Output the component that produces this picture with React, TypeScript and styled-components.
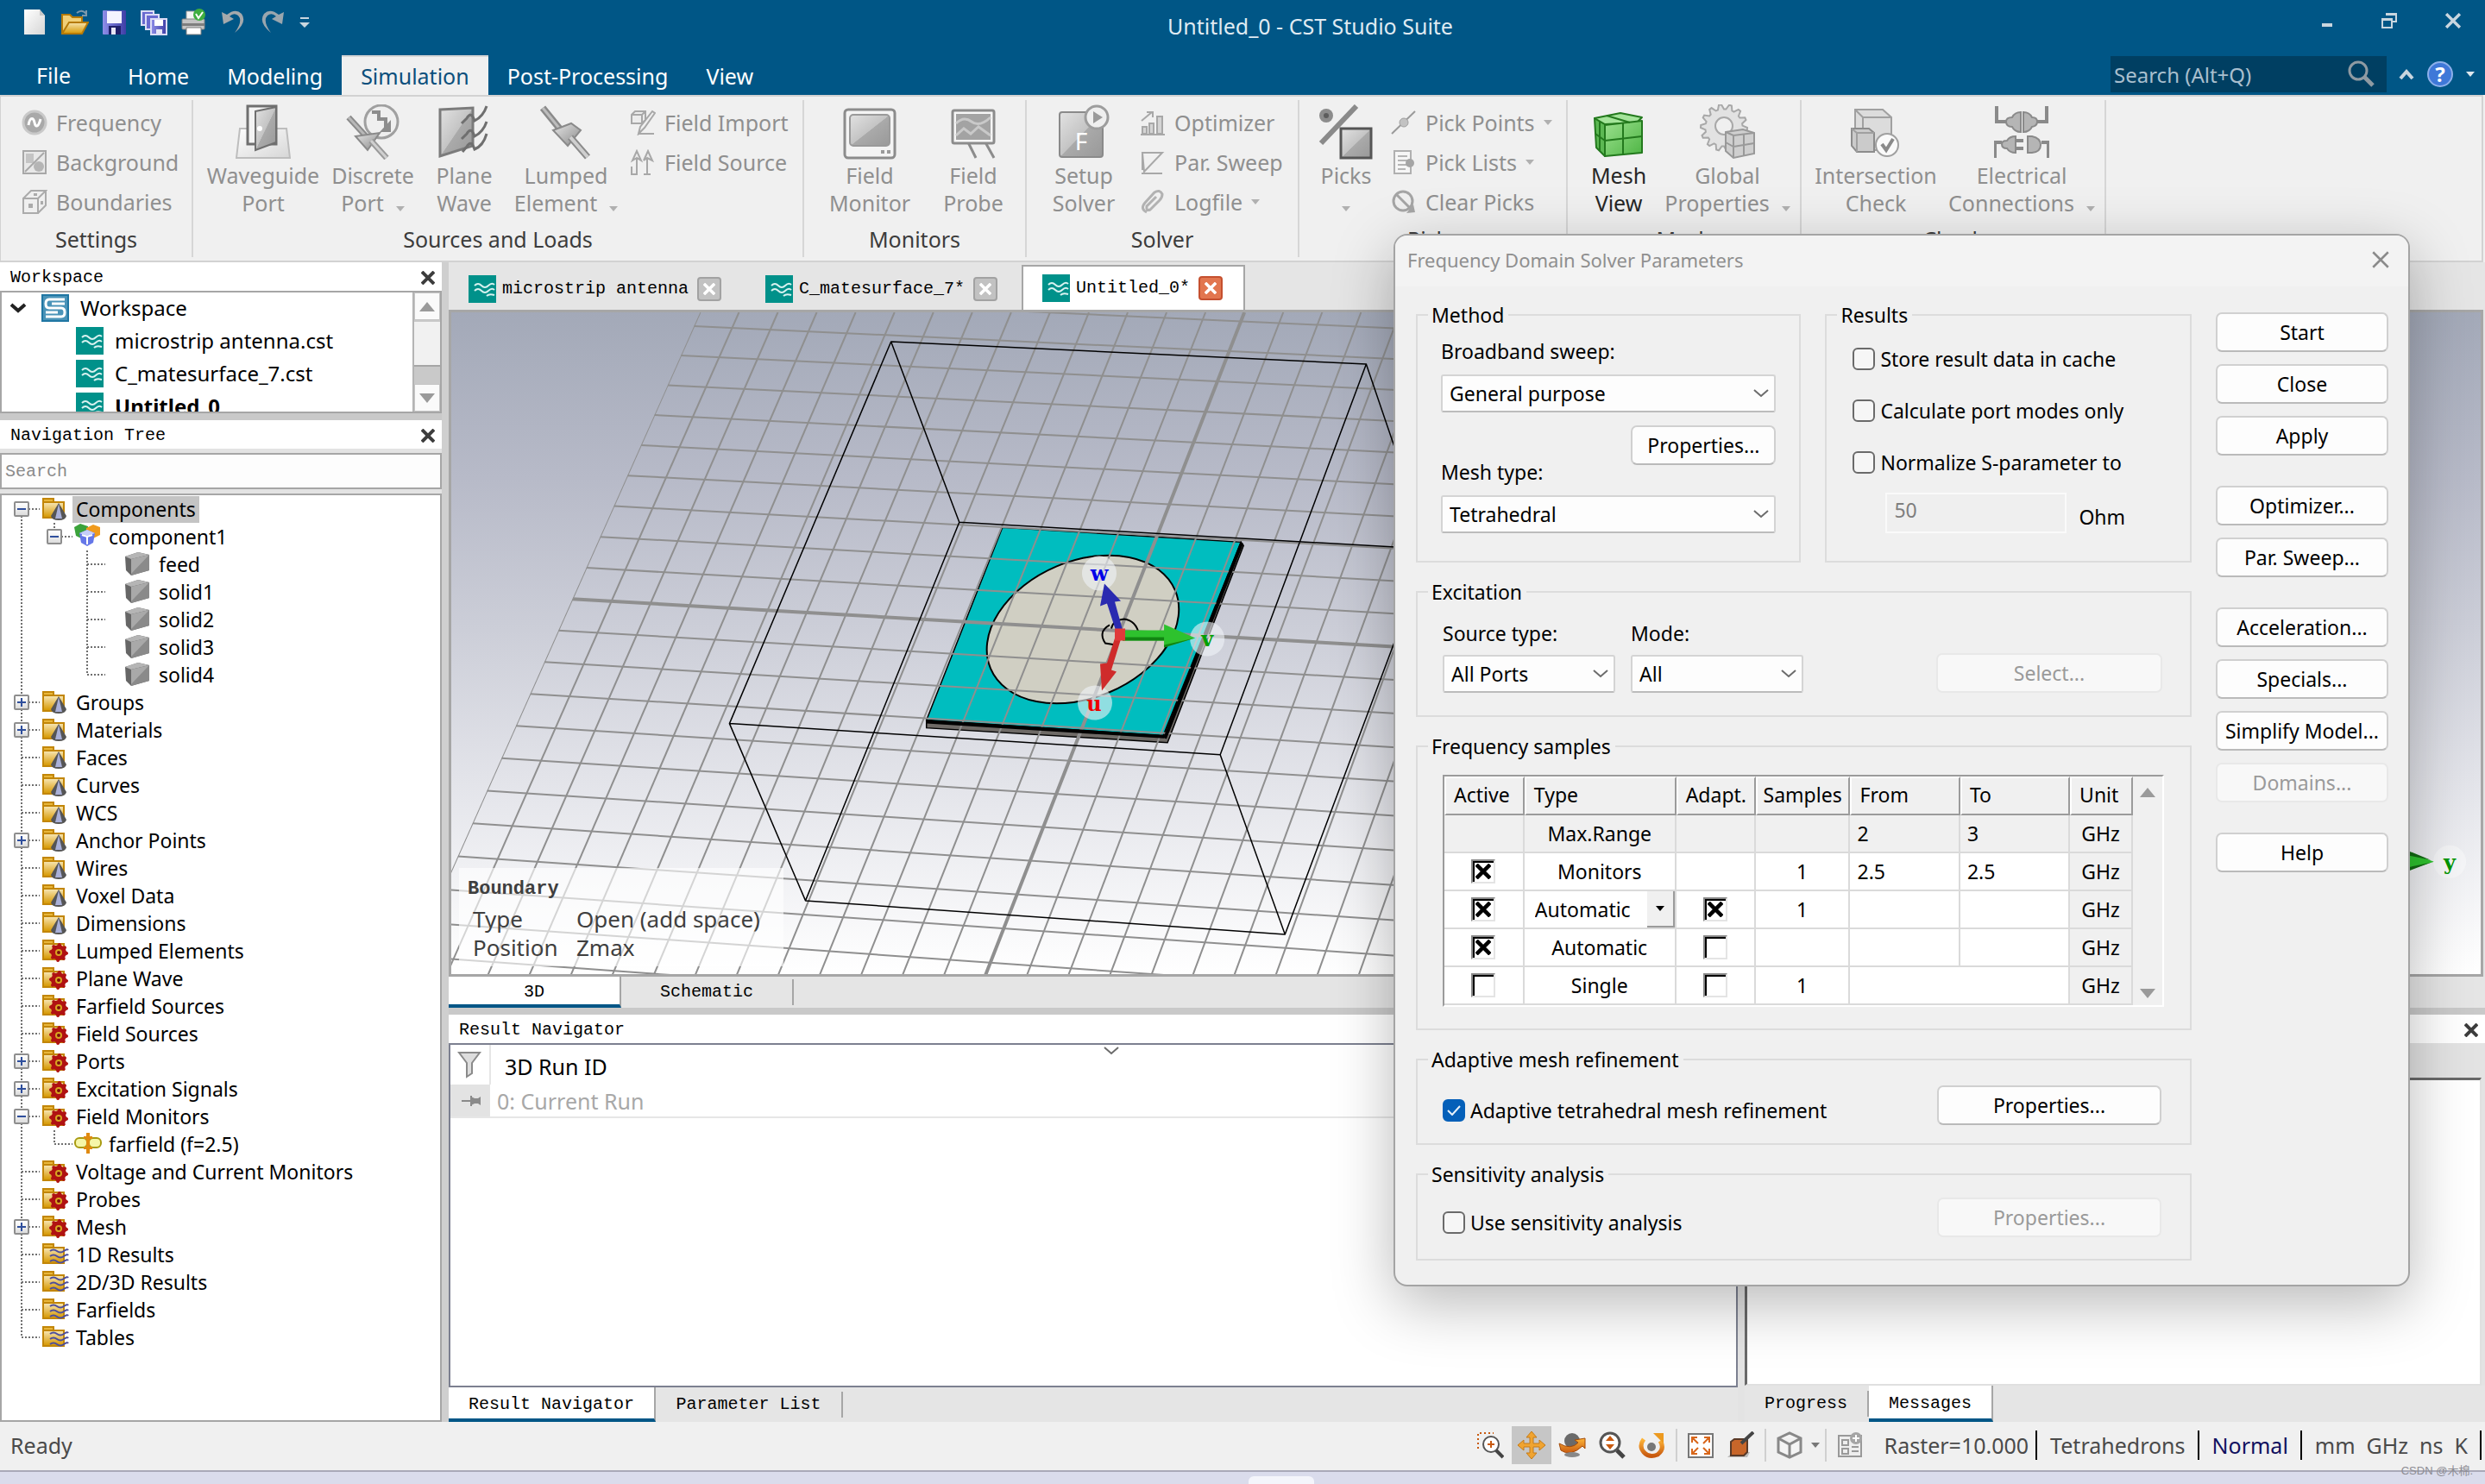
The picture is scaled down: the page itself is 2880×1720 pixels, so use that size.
import React from "react";
import styled, { createGlobalStyle, css } from "styled-components";

const UI = '"Noto Sans", "Open Sans", sans-serif';
const MONO = '"Liberation Mono", "Noto Sans CJK SC", monospace';

const GlobalStyle = createGlobalStyle`
  *, *::before, *::after { box-sizing: border-box; }
  body { margin: 0; background: #f0f0f0; font-family: ${UI}; font-size: 24px; color: #000; }
  button, input, select { font: inherit; color: inherit; margin: 0; }
  button { padding: 0; border: 0; background: none; }
  svg { display: block; flex: none; }
`;

/* ---------- window frame ---------- */

const Window = styled.div`
  position: relative;
  display: flex;
  flex-direction: column;
  height: 100vh;
  overflow: hidden;
`;

const TitleArea = styled.header`
  background: #005686;
  color: #fff;
  height: 110px;
  flex: none;
  display: flex;
  flex-direction: column;
  justify-content: space-between;
  font-size: 25px;
`;

const TitleBar = styled.div`
  display: grid;
  grid-template-columns: 1fr auto 1fr;
  align-items: start;
  height: 60px;
  padding: 0 28px 0 25px;
`;

const QuickAccess = styled.div`
  display: flex;
  gap: 14px;
  align-items: center;
  height: 52px;
`;

const WindowTitle = styled.h1`
  margin: 0;
  padding-left: 160px;
  font-size: 25px;
  font-weight: 400;
  line-height: 60px;
  color: #dfeaf2;
`;

const WindowControls = styled.div`
  display: flex;
  justify-content: flex-end;
  gap: 56px;
  height: 48px;
  align-items: center;
`;

const TabStrip = styled.nav`
  display: flex;
  height: 46px;
`;

const MenuTab = styled.button<{ $active?: boolean; $file?: boolean }>`
  padding: 0 22px;
  line-height: 48px;
  color: ${(p) => (p.$active ? "#0b4f7c" : "#fff")};
  background: ${(p) => (p.$active ? "#f0f0f0" : "transparent")};
  ${(p) => p.$active && "box-shadow: inset 0 2px #d6d6d6;"}
  ${(p) => p.$file && "padding: 0 44px 0 42px; line-height: 46px;"}
`;

const StripEnd = styled.div`
  margin-left: auto;
  display: flex;
  align-items: center;
  gap: 14px;
  padding: 0 12px 2px 0;
`;

const SearchField = styled.label`
  display: flex;
  align-items: center;
  width: 320px;
  height: 42px;
  padding: 0 14px 0 4px;
  background: #003f62;
  font-size: 24px;
  input {
    flex: 1;
    min-width: 0;
    border: 0;
    background: none;
    padding: 0;
    outline: 0;
  }
  input::placeholder { color: #a9bfce; opacity: 1; }
`;

/* ---------- ribbon ---------- */

const Ribbon = styled.div`
  display: flex;
  flex: none;
  height: 194px;
  margin-right: 2px;
  background: #f0f0f0;
  border: 2px solid #d2d2d2;
  border-left-width: 1px;
  font-size: 25px;
`;

const Group = styled.section<{ $w: number }>`
  width: ${(p) => p.$w}px;
  display: flex;
  flex-direction: column;
  margin: 4px 0;
  border-right: 2px solid #d6d6d6;
`;

const GroupBody = styled.div<{ $pad: number }>`
  display: flex;
  height: 142px;
  padding-left: ${(p) => p.$pad}px;
`;

const GroupLabel = styled.h2`
  margin: 0;
  font-size: 25px;
  font-weight: 400;
  line-height: 38px;
  text-align: center;
  color: #3c3c3c;
`;

const BigButton = styled.button<{ $w: number; $on?: boolean }>`
  width: ${(p) => p.$w}px;
  display: flex;
  flex-direction: column;
  align-items: center;
  padding-top: 5px;
  line-height: 32px;
  color: ${(p) => (p.$on ? "#262626" : "#8f8f8f")};
  span { display: flex; gap: 14px; align-items: center; height: 32px; }
  span svg { margin-top: 14px; }
  > svg { margin-bottom: 2px; }
`;

const SmallColumn = styled.div<{ $pad: number }>`
  display: flex;
  flex-direction: column;
  padding: 3px 0 0 ${(p) => p.$pad}px;
`;

const SmallButton = styled.button`
  display: flex;
  align-items: center;
  gap: 10px;
  height: 46px;
  white-space: nowrap;
  color: #8f8f8f;
`;

/* ---------- workspace ---------- */

const Body = styled.div`
  flex: 1;
  min-height: 0;
  display: flex;
  background: #e3e3e3;
`;

const Sidebar = styled.aside`
  width: 520px;
  flex: none;
  display: flex;
  flex-direction: column;
  border-right: 8px solid #cfcfcf;
`;

const PanelTitle = styled.div`
  display: flex;
  align-items: center;
  justify-content: space-between;
  height: 33px;
  flex: none;
  padding: 2px 8px 0 12px;
  background: #fff;
  font: 20px/30px ${MONO};
`;

const FileList = styled.div`
  display: flex;
  height: 142px;
  flex: none;
  border: 2px solid #a6a6a6;
  background: #fff;
  overflow: hidden;
`;

const FileRows = styled.ul`
  flex: 1;
  margin: 0;
  padding: 0;
  list-style: none;
`;

const FileRow = styled.li<{ $depth: number; $bold?: boolean }>`
  display: flex;
  align-items: center;
  gap: 13px;
  height: 38px;
  line-height: 34px;
  padding: 0 0 3px ${(p) => (p.$depth ? 86 : 9)}px;
  font-weight: ${(p) => (p.$bold ? 700 : 400)};
  svg + svg { margin-left: 4px; }
`;

const ScrollTrack = styled.div`
  width: 32px;
  display: flex;
  flex-direction: column;
  background: #c9c9c9;
  border-left: 2px solid #b4b4b4;
`;

const ScrollButton = styled.button<{ $end?: boolean }>`
  height: 32px;
  display: grid;
  place-items: center;
  background: #fafafa;
  border: 1px solid #c4c4c4;
  ${(p) => p.$end && "margin-top: auto;"}
`;

const ScrollThumb = styled.div`
  height: 52px;
  margin: 2px 0;
  background: #f1f1f1;
  border-bottom: 2px solid #a6a6a6;
`;

const Splitter = styled.div`
  height: 8px;
  flex: none;
  background: #c9c9c9;
`;

const TreeSearch = styled.input`
  height: 42px;
  flex: none;
  margin: 5px 0;
  padding: 0 4px;
  border: 2px solid #a6a6a6;
  background: #fdfdfd;
  outline: 0;
  && { font: 20px ${MONO}; }
  &::placeholder { color: #8a8a8a; opacity: 1; }
`;

const Tree = styled.ul`
  flex: 1;
  margin: 0;
  padding: 0;
  list-style: none;
  border: 2px solid #a6a6a6;
  background: #fff;
  overflow: hidden;
`;

const TreeRow = styled.li`
  display: flex;
  align-items: center;
  height: 32px;
  font-size: 23px;
`;

const Gutter = styled.div<{ $w: number }>`
  width: ${(p) => p.$w}px;
  height: 32px;
  display: grid;
  > * { grid-area: 1 / 1; }
`;

const Expander = styled.button<{ $x: number }>`
  width: 18px;
  height: 18px;
  margin: 7px 0 0 ${(p) => p.$x - 9}px;
  border: 2px solid #8e8e8e;
  border-radius: 2px;
  background: linear-gradient(#fff, #dcdcdc);
  display: grid;
  place-items: center;
`;

const NodeName = styled.span<{ $selected?: boolean }>`
  margin-left: 4px;
  padding: 0 4px;
  line-height: 31px;
  white-space: nowrap;
  background: ${(p) => (p.$selected ? "#c4c4c4" : "transparent")};
`;

const Main = styled.main`
  flex: 1;
  min-width: 0;
  display: flex;
  flex-direction: column;
`;

const DocTabs = styled.div`
  display: flex;
  align-items: flex-end;
  height: 55px;
  flex: none;
  background: #e5e5e5;
`;

const DocTab = styled.div<{ $active?: boolean }>`
  display: flex;
  align-items: center;
  gap: 7px;
  height: 52px;
  padding: 4px 28px 0 23px;
  font: 20px/48px ${MONO};
  ${(p) =>
    p.$active &&
    css`
      background: #fff;
      border: 2px solid #a6a6a6;
      border-bottom: 0;
      padding: 0 24px 0 22px;
    `}
`;

const TabClose = styled.button<{ $hot?: boolean }>`
  width: 28px;
  height: 28px;
  margin-left: 3px;
  display: grid;
  place-items: center;
  border-radius: 4px;
  border: 2px solid ${(p) => (p.$hot ? "#c5502f" : "#a2a2a2")};
  background: ${(p) => (p.$hot ? "#e2764f" : "#c2c2c2")};
`;

const Viewport = styled.div`
  position: relative;
  flex: 1;
  min-height: 0;
  margin-right: 2px;
  border: 3px solid #a6a6a6;
  background: linear-gradient(#a3a9b8 0%, #b7bac8 25%, #ccced8 48%, #e2e3e9 70%, #fff 100%);
  overflow: hidden;
`;

const BoundaryNote = styled.dl`
  position: absolute;
  left: 9px;
  bottom: 9px;
  width: 376px;
  height: 114px;
  margin: 0;
  padding: 8px 10px 4px;
  display: grid;
  grid-template-columns: 126px 1fr;
  grid-template-rows: 34px 34px 32px;
  align-items: center;
  background: rgba(255, 255, 255, 0.62);
  font-size: 26px;
  line-height: 32px;
  color: #3f3f3f;
  h3 { grid-column: 1 / 3; margin: 0; font: 700 22px/34px ${MONO}; }
  dt { padding-left: 6px; }
  dd { margin: 0; white-space: nowrap; }
`;

const ViewTabs = styled.div<{ $h: number }>`
  display: flex;
  align-items: center;
  height: ${(p) => p.$h}px;
  flex: none;
  background: #e5e5e5;
`;

const ViewTab = styled.button<{ $active?: boolean; $w: number; $line?: boolean }>`
  width: ${(p) => p.$w}px;
  && { font: 20px/30px ${MONO}; }
  ${(p) => p.$line && "border-right: 2px solid #a6a6a6;"}
  ${(p) =>
    p.$active &&
    css`
      align-self: stretch;
      padding-top: 3px;
      background: #fff;
      border-right: 2px solid #a6a6a6;
      border-bottom: 4px solid #005686;
    `}
`;

const Dock = styled.div`
  display: grid;
  grid-template-columns: 1494fr 8px 858fr;
  height: 472px;
  flex: none;
`;

const DockPane = styled.section`
  min-width: 0;
  display: flex;
  flex-direction: column;
`;

const ResultBox = styled.div`
  flex: 1;
  border: 2px solid #7c8090;
  background: #fff;
`;

const ResultTable = styled.table`
  width: 100%;
  border-collapse: collapse;
  font-size: 25px;
  line-height: 34px;
  th, td { font-weight: 400; text-align: left; padding: 0; }
  tr { border-bottom: 2px solid #e6e6e6; }
  thead tr { border: 0; }
  td { height: 38px; color: #a8a8a8; padding-left: 8px; }
  th + th { padding-left: 16px; border-left: 2px solid #e6e6e6; }
  th:first-child, td:first-child { width: 46px; padding-left: 8px; }
  td:first-child { background: #e3e3e3; }
`;

const HeaderCell = styled.div`
  display: grid;
  grid-template-columns: 694px auto;
  align-items: start;
  height: 46px;
  padding-top: 2px;
  line-height: 46px;
`;

const MessageTools = styled.div`
  height: 40px;
  flex: none;
  background: #e3e3e3;
`;

const MessageBox = styled.div`
  flex: 1;
  margin-right: 4px;
  border: 3px solid #696969;
  border-right: 2px solid #e0e0e0;
  border-bottom: 2px solid #e0e0e0;
  background: #fff;
`;

const StatusBar = styled.footer`
  display: flex;
  align-items: center;
  height: 58px;
  flex: none;
  padding: 0 4px 3px 12px;
  background: #f0f0f0;
  border-bottom: 2px solid #a9a9b8;
  font-size: 25px;
  color: #4a4a4a;
`;

const StatusTools = styled.div`
  margin-left: auto;
  display: flex;
  align-items: center;
  gap: 3px;
`;

const Tool = styled.button<{ $on?: boolean }>`
  width: ${(p) => (p.$on ? 46 : 43)}px;
  height: 44px;
  display: grid;
  place-items: center;
  background: ${(p) => (p.$on ? "#c6c6c6" : "transparent")};
`;

const ToolDivider = styled.i`
  width: 2px;
  height: 38px;
  margin: 0 3px;
  background: #d0d0d0;
`;

const Reading = styled.span<{ $blue?: boolean }>`
  padding: 0 14px 0 15px;
  line-height: 34px;
  border-right: 2px solid #000;
  white-space: pre;
  color: ${(p) => (p.$blue ? "#10105f" : "#4a4a4a")};
  &:first-of-type { padding: 0 8px 0 18px; }
`;

const Taskbar = styled.div`
  height: 14px;
  flex: none;
  background: #dadcec;
  display: flex;
  justify-content: center;
`;

const TaskPill = styled.div`
  width: 76px;
  margin: 5px 0 0 90px;
  background: #f4f5fb;
  border-radius: 6px 6px 0 0;
`;

const Watermark = styled.small`
  position: absolute;
  right: 14px;
  bottom: 6px;
  font: 13px/18px "Liberation Sans", "Noto Sans CJK SC", sans-serif;
  color: #8d8d94;
`;

/* ---------- solver dialog ---------- */

const Dialog = styled.section`
  position: absolute;
  top: 271px;
  right: 87px;
  width: 1178px;
  border: 2px solid #a4a4a4;
  border-radius: 16px;
  background: #f0f0f0;
  box-shadow: 0 20px 70px rgba(0, 0, 0, 0.28);
  overflow: hidden;
  font-size: 23px;
`;

const DialogTitle = styled.header`
  display: flex;
  justify-content: space-between;
  align-items: center;
  height: 59px;
  padding: 0 22px 3px 14px;
  background: #f3f3f3;
  font-size: 22px;
  color: #8f8f8f;
`;

const DialogBody = styled.form`
  display: flex;
  gap: 28px;
  padding: 18px 23px 28px 24px;
`;

const Sections = styled.div`
  flex: 1;
  display: flex;
  flex-direction: column;
  gap: 19px;
`;

const Row = styled.div<{ $gap?: number; $align?: string }>`
  display: flex;
  gap: ${(p) => p.$gap ?? 0}px;
  align-items: ${(p) => p.$align ?? "stretch"};
`;

const MeshRow = styled.div`
  display: flex;
  justify-content: space-between;
  align-items: flex-start;
  height: 72px;
  padding-top: 3px;
  label { align-self: flex-end; }
`;

const Box = styled.fieldset<{ $grow?: number; $pad: string }>`
  flex: ${(p) => (p.$grow ? `${p.$grow} 1 0` : "none")};
  min-width: 0;
  margin: 0;
  border: 2px solid #dcdcdc;
  padding: 0;
  legend { margin-left: 12px; padding: 0 5px 0 4px; line-height: 30px; }
  > div { padding: ${(p) => p.$pad}; }
`;

const Stack = styled.div<{ $gap: number }>`
  display: flex;
  flex-direction: column;
  gap: ${(p) => p.$gap}px;
`;

const FieldLabel = styled.label`
  line-height: 30px;
`;

const SelectShell = styled.span<{ $w?: number }>`
  display: grid;
  align-items: center;
  width: ${(p) => (p.$w ? `${p.$w}px` : "100%")};
  > * { grid-area: 1 / 1; }
  svg { justify-self: end; margin-right: 8px; pointer-events: none; }
  select {
    appearance: none;
    width: 100%;
    height: 44px;
    padding: 0 30px 0 8px;
    border: 2px solid #d4d4d4;
    border-bottom-color: #bcbcbc;
    border-radius: 3px;
    background: #fdfdfd;
  }
`;

const PushButton = styled.button<{ $w: number; $right?: boolean }>`
  width: ${(p) => p.$w}px;
  height: 46px;
  border: 2px solid #d0d0d0;
  border-bottom-color: #bababa;
  border-radius: 7px;
  background: #fdfdfd;
  ${(p) => p.$right && "margin-left: auto;"}
  &:disabled { color: #9a9a9a; background: #f8f8f8; border-color: #e8e8e8; }
`;

const CheckLabel = styled.label`
  display: flex;
  align-items: center;
  gap: 6px;
  line-height: 34px;
`;

const CheckShell = styled.span`
  display: grid;
  place-items: center;
  > * { grid-area: 1 / 1; }
  svg { pointer-events: none; display: none; }
  input { appearance: none; }
  input:checked + svg { display: block; }
`;

const RoundBox = styled.input`
  width: 26px;
  height: 26px;
  border: 2px solid #6a6a6a;
  border-radius: 6px;
  background: #f6f6f6;
  &:checked { background: #0560b9; border-color: #0560b9; }
`;

const SunkenBox = styled.input`
  width: 28px;
  height: 28px;
  border: 2px solid #8a8a8a;
  border-right-color: #e4e4e4;
  border-bottom-color: #e4e4e4;
  box-shadow: inset 2px 2px #000;
  background: #fff;
`;

const Impedance = styled.input`
  width: 210px;
  height: 47px;
  padding: 0 8px 8px;
  border: 2px solid #fafafa;
  background: #efefef;
  &:disabled { color: #7e7e7e; }
`;

const Indent = styled.div`
  display: flex;
  gap: 14px;
  padding-left: 38px;
  margin-top: 18px;
  label { align-self: flex-end; line-height: 38px; }
`;

const GridFrame = styled.div`
  display: flex;
  border: 2px solid #fff;
  border-top-color: #9b9b9b;
  border-left-color: #9b9b9b;
`;

const SampleTable = styled.table`
  flex: 1;
  border-collapse: separate;
  border-spacing: 0;
  table-layout: fixed;
  background: #fff;
  th {
    height: 45px;
    padding: 0 0 4px 9px;
    font-weight: 400;
    text-align: left;
    background: #f0f0f0;
    border: 2px solid #fff;
    border-right-color: #9b9b9b;
    border-bottom-color: #9b9b9b;
  }
  th:nth-child(4) { padding-left: 7px; }
  td {
    height: 44px;
    padding: 0;
    text-align: center;
    border-right: 2px solid #dadada;
    border-bottom: 2px solid #dadada;
  }
  tbody tr:first-child td, td:last-child { background: #f0f0f0; }
  td:nth-last-child(2), td.from { text-align: left; padding-left: 8px; }
`;

const TypePick = styled.div`
  display: flex;
  align-items: stretch;
  height: 42px;
  select { appearance: none; flex: 1; min-width: 0; border: 0; background: none; padding: 0 0 0 12px; }
`;

const DropButton = styled.button`
  width: 32px;
  display: grid;
  place-items: center;
  background: #f0f0f0;
  border-right: 2px solid #9b9b9b;
  border-bottom: 2px solid #9b9b9b;
`;

const GridScroll = styled.div`
  width: 34px;
  display: flex;
  flex-direction: column;
  justify-content: space-between;
  align-items: center;
  padding: 12px 0 8px;
  background: #f0f0f0;
`;

const ButtonColumn = styled.div`
  width: 200px;
  display: flex;
  flex-direction: column;
  gap: 35px;
  padding-top: 12px;
`;

/* ---------- icons ---------- */

const Caret = ({ c = "#b0b0b0" }: { c?: string }) => (
  <svg width="10" height="6" viewBox="0 0 10 6"><path d="M0 0h10L5 6z" fill={c} /></svg>
);
const Cross = ({ s = 16, c = "#3d3d3d", w = 4 }: { s?: number; c?: string; w?: number }) => (
  <svg width={s} height={s} viewBox="0 0 16 16"><path d="M1 1l14 14M15 1L1 15" stroke={c} strokeWidth={w} fill="none" /></svg>
);
const Chevron = () => (
  <svg width="18" height="10" viewBox="0 0 18 10"><path d="M1 1l8 7 8-7" stroke="#6b6b6b" strokeWidth="2" fill="none" /></svg>
);
const Triangle = ({ down }: { down?: boolean }) => (
  <svg width="18" height="12" viewBox="0 0 18 12"><path d={down ? "M0 1h18l-9 11z" : "M0 12h18L9 1z"} fill="#9a9a9a" /></svg>
);

const Defs = () => (
  <svg width="0" height="0" style={{ position: "absolute" }} aria-hidden="true">
    <defs>
      <linearGradient id="grey" x1="0" y1="0" x2="1" y2="1"><stop offset="0" stopColor="#e2e2e2" /><stop offset=".5" stopColor="#c4c4c4" /><stop offset=".51" stopColor="#aaa" /><stop offset="1" stopColor="#999" /></linearGradient>
      <linearGradient id="paper" x1="0" y1="0" x2="1" y2="1"><stop offset="0" stopColor="#fff" /><stop offset="1" stopColor="#d6d6d6" /></linearGradient>
      <linearGradient id="gold" x1="0" y1="0" x2="0" y2="1"><stop offset="0" stopColor="#f6e3ad" /><stop offset="1" stopColor="#d79a05" /></linearGradient>
      <linearGradient id="violet" x1="0" y1="0" x2="1" y2="0"><stop offset="0" stopColor="#8e8ee8" /><stop offset="1" stopColor="#3e3ea6" /></linearGradient>
      <linearGradient id="orange" x1="0" y1="0" x2="0" y2="1"><stop offset="0" stopColor="#ffb638" /><stop offset="1" stopColor="#c85a10" /></linearGradient>
      <linearGradient id="leaf" x1="0" y1="0" x2="1" y2="1"><stop offset="0" stopColor="#9be08e" /><stop offset="1" stopColor="#4eb544" /></linearGradient>
      <linearGradient id="steel" x1="0" y1="0" x2="1" y2="1"><stop offset="0" stopColor="#e6e6e6" /><stop offset="1" stopColor="#8a8a8a" /></linearGradient>
    </defs>
  </svg>
);

const quick = [
  <g key="n"><path d="M3 1h18l6 7v22H3z" fill="url(#paper)" /><path d="M21 1v7h6z" fill="#c8c8c8" /></g>,
  <g key="o"><path d="M18 5q6-5 11 1M29 2v6h-5" stroke="#7c98ac" strokeWidth="2" fill="none" /><path d="M1 28V7h9l3 3h11v8z" fill="#f0cf78" stroke="#b57a08" strokeWidth="2" /><path d="M9 16h22l-7 13H1z" fill="url(#gold)" stroke="#b57a08" strokeWidth="2" /></g>,
  <g key="s"><rect x="2" y="2" width="27" height="28" rx="1" fill="url(#violet)" /><rect x="7" y="3" width="17" height="14" fill="#f4f4ff" /><rect x="9" y="20" width="14" height="10" fill="#20206a" /><rect x="12" y="22" width="5" height="8" fill="#e6e6f4" /></g>,
  <g key="a"><path d="M1 3h14v16H1z" fill="#6a6ad0" stroke="#dcdcf6" strokeWidth="2" /><path d="M6 7h15v17H6z" fill="#6a6ad0" stroke="#dcdcf6" strokeWidth="2" /><rect x="12" y="12" width="18" height="18" fill="url(#violet)" stroke="#dcdcf6" strokeWidth="2" /><rect x="16" y="13" width="10" height="7" fill="#fff" /><rect x="18" y="24" width="7" height="5" fill="#e6e6f4" /></g>,
  <g key="p"><path d="M7 3h14v10H7z" fill="#f4f4f4" stroke="#9a9a9a" /><rect x="2" y="12" width="26" height="12" rx="1" fill="#c4c4c4" stroke="#838383" /><rect x="2" y="17" width="26" height="3" fill="#7e7e7e" /><path d="M7 22h17v8H7z" fill="#fff" stroke="#7e7e7e" /><circle cx="22" cy="7" r="7" fill="#3fae3f" /><path d="M18 6l3 5 5-7" stroke="#fff" strokeWidth="2" fill="none" /></g>,
  <path key="u" d="M2 4l2 14 12-6-5-3q5-5 10-1 6 6-4 20Q32 16 25 6 18-1 8 7z" fill="#a5a9ac" />,
  <path key="r" d="M28 4l-2 14-12-6 5-3q-5-5-10-1-6 6 4 20Q-2 16 5 6q7-7 17 1z" fill="#9aa6ae" />,
];

const small: Record<string, React.ReactNode> = {
  frequency: <g><circle cx="15" cy="15" r="13" fill="#a9a9a9" stroke="#c9c9c9" strokeWidth="3" /><path d="M8 18c2-11 6-8 7-3s4 7 7-4" fill="none" stroke="#fff" strokeWidth="3" /></g>,
  background: <g><rect x="2" y="2" width="26" height="26" fill="#e8e8e8" stroke="#a8a8a8" strokeWidth="2" /><path d="M5 5h9v11H5z" fill="#c4c4c4" /><path d="M4 26L26 4" stroke="#a8a8a8" strokeWidth="2" /><circle cx="20" cy="20" r="6" fill="#b5b5b5" /></g>,
  boundaries: <g fill="#efefef" stroke="#ababab" strokeWidth="2"><path d="M2 11h17v17H2zM2 11L11 2h17l-9 9M28 2v17l-9 9" /><path d="M8 17h5v5H8z" fill="#ababab" stroke="none" /><path d="M14 5h4v3h-4zM22 14h3v4h-3z" fill="#ababab" stroke="none" /></g>,
  import: <g fill="none" stroke="#a8a8a8" strokeWidth="2"><path d="M2 6l4-4h12v10l-4 4H2zM2 6h12v10M14 6l4-4" fill="#ececec" /><path d="M10 28l2-8L26 2l3 2-12 17zM10 28h18" /></g>,
  source: <path d="M8 29V10M8 10L3 13l5-11 5 11zM20 29V10M20 10l-4 3 5-11 5 11zM2 20v9h7M16 29h8" fill="#ececec" stroke="#a8a8a8" strokeWidth="2" />,
  optimizer: <g fill="#d4d4d4" stroke="#a8a8a8" strokeWidth="2"><path d="M3 20h5v8H3zM11 16h5v12h-5zM20 8h6v20h-6zM1 29h28" /><path d="M2 13L14 3M8 3h7v6" fill="none" /></g>,
  sweep: <path d="M3 4h23L5 26zM3 4v20M2 28h24" fill="none" stroke="#a8a8a8" strokeWidth="2" />,
  logfile: <path d="M8 27q-8-4-2-11L17 4q6-4 9 2 0 4-3 7L12 24q-5 2-4-4L19 9" fill="none" stroke="#b2b2b2" strokeWidth="3" />,
  points: <g><path d="M1 28L28 2" stroke="#9a9a9a" strokeWidth="2" /><circle cx="15" cy="15" r="5" fill="#c2c2c2" stroke="#a0a0a0" /></g>,
  lists: <g><path d="M4 2h19v26H4z" fill="#f6f6f6" stroke="#b0b0b0" strokeWidth="2" /><path d="M8 8h11M8 13h11M8 18h11M8 23h9" stroke="#b5b5b5" strokeWidth="2" /><circle cx="22" cy="16" r="5" fill="#a5a5a5" /></g>,
  clear: <g fill="none" stroke="#a5a5a5" strokeWidth="3"><circle cx="14" cy="14" r="11" fill="#efefef" /><path d="M6 6l17 17" /><path d="M18 28l10-1-2-9" fill="#a5a5a5" stroke="none" /></g>,
};
const SmallIcon = ({ name }: { name: string }) => <svg width="30" height="30" viewBox="0 0 30 30">{small[name]}</svg>;

const gearPath = (cx: number, cy: number, r: number, n: number) =>
  Array.from({ length: n * 4 }, (_, i) => {
    const a = (i / (n * 4)) * Math.PI * 2;
    const q = i % 4 < 2 ? r : r * 0.8;
    return `${i ? "L" : "M"}${(cx + q * Math.cos(a)).toFixed(1)} ${(cy + q * Math.sin(a)).toFixed(1)}`;
  }).join("") + "z";

const big: Record<string, React.ReactNode> = {
  waveguide: <g><path d="M5 28h54l4 34H1z" fill="url(#paper)" stroke="#bdbdbd" strokeWidth="2" /><path d="M14 2h33v44H14z" fill="#f4f4f4" stroke="#6f6f6f" strokeWidth="3" /><path d="M23 8l24-5v41l-24 9z" fill="url(#grey)" stroke="#6f6f6f" strokeWidth="2" /><circle cx="28" cy="28" r="3" fill="#fff" /></g>,
  discrete: <g><circle cx="42" cy="20" r="19" fill="#efefef" stroke="#a0a0a0" strokeWidth="3" /><path d="M31 9h8v8h8v10" fill="none" stroke="#8c8c8c" strokeWidth="4" /><path d="M53 18v14H40z" fill="#8c8c8c" /><path d="M4 15l22 24" stroke="#8a8a8a" strokeWidth="7" /><path d="M4 15l22 24" stroke="#b8b8b8" strokeWidth="3" /><path d="M12 37l28-4-14 20z" fill="url(#steel)" stroke="#8a8a8a" strokeWidth="2" /><path d="M30 42l18 20" stroke="#9a9a9a" strokeWidth="7" /><path d="M30 42l18 20" stroke="#d0d0d0" strokeWidth="3" /></g>,
  plane: <g><path d="M4 6l38-2v44L4 60z" fill="url(#grey)" stroke="#7b7b7b" strokeWidth="3" /><path d="M58 2q-4 12-14 17-4-12-9-3l-6 6M58 20q-4 12-14 17-4-12-9-3l-6 6M58 34q-4 14-14 18-4-12-9-3l-5 6" fill="none" stroke="#6f6f6f" strokeWidth="3" /></g>,
  lumped: <g><path d="M5 4l26 32" stroke="#8a8a8a" strokeWidth="8" /><path d="M5 4l26 32" stroke="#bdbdbd" strokeWidth="3" /><path d="M17 30l21-8 11 8-15 18z" fill="url(#steel)" stroke="#8a8a8a" strokeWidth="2" /><path d="M37 38l20 23" stroke="#8a8a8a" strokeWidth="8" /><path d="M37 38l20 23" stroke="#cfcfcf" strokeWidth="4" /></g>,
  monitor: <g><rect x="3" y="6" width="58" height="56" rx="4" fill="#f4f4f4" stroke="#8c8c8c" strokeWidth="3" /><rect x="9" y="12" width="46" height="36" rx="4" fill="url(#grey)" stroke="#9a9a9a" strokeWidth="2" /><path d="M45 53h4v4h-4zM52 53h4v4h-4z" fill="#9a9a9a" /></g>,
  probe: <g><path d="M26 44l9 18M46 44l10 18" stroke="#8c8c8c" strokeWidth="3" /><rect x="8" y="7" width="48" height="38" rx="2" fill="#f6f6f6" stroke="#8c8c8c" strokeWidth="3" /><rect x="12" y="11" width="40" height="30" fill="#a3a3a3" /><path d="M12 22q9-9 18-2t22-5M12 36l9-8 8 6 9-8 14 10" stroke="#c9c9c9" strokeWidth="3" fill="none" /></g>,
  setup: <g><rect x="4" y="9" width="50" height="52" rx="3" fill="url(#grey)" stroke="#8a8a8a" strokeWidth="2" /><text x="29" y="53" fontFamily={UI} fontSize="28" fill="#fff" textAnchor="middle">F</text><circle cx="47" cy="15" r="13" fill="#efefef" stroke="#9d9d9d" strokeWidth="3" /><path d="M43 8l11 7-11 7z" fill="#9a9a9a" /></g>,
  picks: <g><circle cx="9" cy="13" r="8" fill="#8c8c8c" /><circle cx="9" cy="13" r="3" fill="#5c5c5c" /><path d="M44 2L3 45" stroke="#8a8a8a" strokeWidth="6" /><rect x="26" y="28" width="35" height="34" fill="url(#grey)" stroke="#555" strokeWidth="3" /></g>,
  mesh: <g stroke="#23791d" strokeWidth="2" strokeLinejoin="round"><path d="M4 16l12 7v37L6 50z" fill="#5cb853" /><path d="M4 16l30-6 25 5-6 6-37 2z" fill="#a4e49a" /><path d="M16 24l43-5v37l-43 4z" fill="url(#leaf)" /><path d="M37 21v37M16 42l43-5M5 34l11 8M10 20v34M18 13l27 8" fill="none" /></g>,
  global: <g><path d={gearPath(28, 27, 27, 14)} fill="#e2e2e2" stroke="#a8a8a8" strokeWidth="2" /><circle cx="28" cy="25" r="10" fill="#f0f0f0" stroke="#a8a8a8" strokeWidth="2" /><path d="M30 32l20-3 13 4v24l-24 5-9-8z" fill="#cfcfcf" stroke="#999" strokeWidth="2" /><path d="M30 32l9 4 24-3M39 36v26M51 35v25M30 44l9 5 24-4" stroke="#999" strokeWidth="2" fill="none" /></g>,
  check: <g stroke="#a0a0a0" strokeWidth="2"><path d="M8 6h32l10 9v38H18L8 46z" fill="#dcdcdc" /><path d="M8 6l9 9h33M17 15v16" fill="none" /><path d="M4 28h20l6 5v22H10l-6-7z" fill="#cbcbcb" stroke="#8c8c8c" /><path d="M4 28l6 5h20M10 33v22" fill="none" /><circle cx="45" cy="47" r="13" fill="#fafafa" /><path d="M39 46l5 7 8-13" fill="none" stroke="#8a8a8a" strokeWidth="4" /></g>,
  electrical: <g fill="none" stroke="#8a8a8a" strokeWidth="4"><path d="M3 2v18h12M61 2v18H49M1 62V44h8M63 62V44h-8" /><path d="M14 20q0-5 7-5 3-6 10-6v23q-7 0-10-6-7 0-7-6z" fill="#b5b5b5" strokeWidth="2" /><path d="M34 9q7 0 10 6 6 0 6 5t-6 6q-3 6-10 6z" fill="#b5b5b5" strokeWidth="2" /><path d="M9 46q0-4 6-4 3-5 10-5v19q-7 0-10-5-6 0-6-5z" fill="#b5b5b5" strokeWidth="2" /><path d="M25 42h9M25 51h9" /><path d="M39 37h5q10 2 10 10t-10 9h-5z" fill="#b5b5b5" strokeWidth="2" /></g>,
};
const BigIcon = ({ name }: { name: string }) => <svg width="64" height="64" viewBox="0 0 64 64">{big[name]}</svg>;

const CstIcon = () => (
  <svg width="32" height="32" viewBox="0 0 32 32">
    <rect width="32" height="32" fill="#00918a" />
    <path d="M7 12q4-4 8 0t8 0 7-1M7 18q4-4 8 0t8 0 7-1M21 24q3-3 9-1" fill="none" stroke="#d8f2f0" strokeWidth="2" />
  </svg>
);
const SuiteIcon = () => (
  <svg width="32" height="32" viewBox="0 0 32 32">
    <rect x="1" y="1" width="30" height="30" fill="#4a93b8" stroke="#1f76a3" strokeWidth="2" />
    <path d="M27 6H9q-4 0-4 5t4 5h14q4 0 4 5t-4 5H5M27 11H12M5 21h14" fill="none" stroke="#fff" strokeWidth="3" />
  </svg>
);

const folder = (
  <g>
    <path d="M1 27V3h14v4h12v20z" fill="#c28608" />
    <path d="M3 9h22v16H3z" fill="url(#gold)" />
    <path d="M3 5h10v2H3z" fill="#e8b63a" />
  </g>
);
const nodes: Record<string, React.ReactNode> = {
  cone: <g>{folder}<path d="M20 9l9 15q-1 5-9 5t-9-5z" fill="#555" /><path d="M20 10l4 17h-8z" fill="#a9b0d8" /></g>,
  gear: <g>{folder}<path d={gearPath(20, 18, 11, 8)} fill="#b01212" /><circle cx="20" cy="18" r="4" fill="#d8a520" /><circle cx="20" cy="18" r="2" fill="#7c0b0b" /></g>,
  wave: <g>{folder}<path d="M10 12q4-3 8 0t8 0 5-1M10 18q4-3 8 0t8 0 5-1M10 24q4-3 8 0t8 0 5-1" fill="none" stroke="#4c4c9c" strokeWidth="2" /></g>,
  parts: <g><path d="M0 5l7-4 9 3v9l-8 5-6-3z" fill="#3ba33b" /><path d="M14 6l8-4 8 3v9l-8 4-8-3z" fill="#f09a1c" /><path d="M6 12l9-4 9 4-2 11-7 4-7-4z" fill="#6577e8" /><path d="M6 12l9-4 9 4-9 3z" fill="#c6cefa" /><path d="M9 14l6 2 6-2M15 16v9" stroke="#fff" strokeWidth="2" fill="none" /></g>,
  solid: <g><path d="M1 7l15-5 13 3v18l-21 6-6-6z" fill="#666" /><path d="M1 7l15-5 13 3-21 5z" fill="#b5b5b5" /><path d="M8 10l21-5v18L8 29z" fill="#8a8a8a" /><path d="M8 10l21-5L8 27z" fill="#a9a9a9" /></g>,
  far: <g><rect x="1" y="9" width="14" height="11" rx="5" fill="#f6f6a8" stroke="#a89a10" strokeWidth="2" /><rect x="17" y="9" width="14" height="11" rx="5" fill="#f6f6a8" stroke="#a89a10" strokeWidth="2" /><path d="M14 3h4v24h-4zM11 7h10v3H11zM11 19h10v3H11z" fill="#e08a10" /></g>,
};

/* ---------- navigation tree ---------- */

type Guide = { w: number; x: number; v?: "full" | "top" | "bottom"; arm?: boolean; box?: "+" | "-" };

const GuideCell = ({ w, x, v, arm, box }: Guide) => (
  <Gutter $w={w}>
    <svg width={w} height="32" viewBox={`0 0 ${w} 32`}>
      {v && <path d={`M${x} ${v === "bottom" ? 16 : 0}V${v === "top" ? 16 : 32}`} stroke="#6f6f6f" strokeWidth="2" strokeDasharray="2 2" />}
      {arm && <path d={`M${x} 16H${Math.min(w, x + 21)}`} stroke="#6f6f6f" strokeWidth="2" strokeDasharray="2 2" />}
    </svg>
    {box && (
      <Expander $x={x} type="button" aria-label={box === "+" ? "Expand" : "Collapse"}>
        <svg width="12" height="12" viewBox="0 0 12 12"><path d={box === "+" ? "M1 6h10M6 1v10" : "M1 6h10"} stroke="#2f4f9c" strokeWidth="2" /></svg>
      </Expander>
    )}
  </Gutter>
);

const root = (box?: "+" | "-", v: Guide["v"] = "full"): Guide => ({ w: 46, x: 23, v, arm: true, box });
const trunk: Guide = { w: 46, x: 23, v: "full" };
type TreeItem = [string, string, Guide[]];
const solids: TreeItem[] = ["feed", "solid1", "solid2", "solid3", "solid4"].map((n, i) => [
  n, "solid", [trunk, { w: 38, x: 0 }, { w: 58, x: 15, v: i === 4 ? "top" : "full", arm: true }],
]);
const treeItems: TreeItem[] = [
  ["Components", "cone", [root("-", "bottom")]],
  ["component1", "parts", [trunk, { w: 38, x: 15, v: "top", arm: true, box: "-" }]],
  ...solids,
  ["Groups", "cone", [root("+")]],
  ["Materials", "cone", [root("+")]],
  ["Faces", "cone", [root()]],
  ["Curves", "cone", [root()]],
  ["WCS", "cone", [root()]],
  ["Anchor Points", "cone", [root("+")]],
  ["Wires", "cone", [root()]],
  ["Voxel Data", "cone", [root()]],
  ["Dimensions", "cone", [root()]],
  ["Lumped Elements", "gear", [root()]],
  ["Plane Wave", "gear", [root()]],
  ["Farfield Sources", "gear", [root()]],
  ["Field Sources", "gear", [root()]],
  ["Ports", "gear", [root("+")]],
  ["Excitation Signals", "gear", [root("+")]],
  ["Field Monitors", "gear", [root("-")]],
  ["farfield (f=2.5)", "far", [trunk, { w: 38, x: 15, v: "top", arm: true }]],
  ["Voltage and Current Monitors", "gear", [root()]],
  ["Probes", "gear", [root()]],
  ["Mesh", "gear", [root("+")]],
  ["1D Results", "wave", [root()]],
  ["2D/3D Results", "wave", [root()]],
  ["Farfields", "wave", [root()]],
  ["Tables", "wave", [root(undefined, "top")]],
];

/* ---------- 3D scene ---------- */

const TOP = 362;
const BOTTOM = 1130;
const colX = (k: number, y: number) => {
  const t = (y - TOP) / (BOTTOM - TOP);
  return 1441 + 45 * k + t * (1141 + 48 * k - 1441 - 45 * k);
};
const rowAt = (j: number) => {
  const y = 693.8 + 36.23 * j + 0.125 * j * j;
  const slope = 0.058 + (y - 694) * 0.0000345;
  const x1 = colX(-14, y);
  const x2 = 2050;
  return { x1, y1: y, x2, y2: y + slope * (x2 - x1) };
};

const Scene = () => {
  const cols = Array.from({ length: 27 }, (_, i) => i - 14);
  const rows = Array.from({ length: 34 }, (_, i) => i - 20);
  return (
    <svg width="100%" height="100%" viewBox="523 362 2352 766" preserveAspectRatio="xMinYMin slice">
      <defs>
        <clipPath id="grid"><path d={`M${colX(-14, TOP)} ${TOP}H2060V${BOTTOM}H${colX(-14, BOTTOM)}z`} /></clipPath>
      </defs>
      <path d="M1073 834v9l279 17 88-228-3-4-90 225z" fill="#6e6a66" stroke="#000" strokeWidth="1.5" />
      <path d="M1161 611l276 17-90 224-274-18z" fill="#00bdbf" stroke="#000" strokeWidth="1.5" />
      <ellipse cx="1254" cy="729" rx="116" ry="79" transform="rotate(-23 1254 729)" fill="#d0cfc3" stroke="#000" strokeWidth="2" />
      <g clipPath="url(#grid)" stroke="#8f8f8f">
        {cols.map((k) => (
          <path key={k} d={`M${colX(k, TOP)} ${TOP}L${colX(k, BOTTOM)} ${BOTTOM}`} strokeWidth={k === 0 ? 4 : 2} />
        ))}
        {rows.map((j) => {
          const r = rowAt(j);
          return <path key={j} d={`M${r.x1} ${r.y1}L${r.x2} ${r.y2}`} strokeWidth={j === 0 ? 4 : 2} />;
        })}
      </g>
      <path
        d="M1032 396L1582 422L1413 874L845 838zM1032 396L1111 605L933 1043L845 838M933 1043L1488 1082L1413 874M1582 422L1655 636L1488 1082M1111 605L1655 636"
        fill="none" stroke="#000" strokeWidth="1.5" strokeLinejoin="round"
      />
      <path d="M1073 836l275 17M1349 855l89-226" fill="none" stroke="#000" strokeWidth="4" />
      <g fill="rgba(240,244,248,.6)"><circle cx="1273" cy="664" r="20" /><circle cx="1398" cy="740" r="20" /><circle cx="1268" cy="814" r="20" /></g>
      <path d="M1287 728q2-10 15-11 14 2 17 18M1285 724q-14 8-5 21l12 2" fill="none" stroke="#000" strokeWidth="2" />
      <path d="M1293 733l-11-34-8 3 5-26 19 20-7 1 10 36z" fill="#2a2ab0" />
      <path d="M1300 730h48v-7l36 16-36 11v-8h-48z" fill="#2ec22e" />
      <path d="M1300 738h48v9l36-8-36 11v-8h-48z" fill="#128512" />
      <path d="M1292 736l-10 32-8 1 2 31 17-22-6-2 12-39z" fill="#cf2b2b" />
      <rect x="1291" y="728" width="12" height="14" fill="#e03a3a" />
      <g fontFamily="DejaVu Serif, serif" fontWeight="700" fontSize="24" textAnchor="middle">
        <text x="1273" y="673" fill="#0000e8">w</text>
        <text x="1398" y="749" fill="#00a000">v</text>
        <text x="1267" y="823" fill="#ee0000">u</text>
      </g>
      <path d="M2780 984l38 14-38 12z" fill="#2fc42f" />
      <path d="M2780 982l34 14-34-7zM2780 1012l34-13-34 7z" fill="#136b13" />
      <circle cx="2836" cy="998" r="19" fill="rgba(255,255,255,.4)" />
      <text x="2836" y="1007" fontFamily="DejaVu Serif, serif" fontWeight="700" fontSize="24" textAnchor="middle" fill="#009600">y</text>
    </svg>
  );
};

/* ---------- small composites ---------- */

const Big = ({ icon, a, b, w, caret, on }: { icon: string; a: string; b?: string; w: number; caret?: boolean; on?: boolean }) => (
  <BigButton $w={w} $on={on} type="button">
    <BigIcon name={icon} />
    <span>{a}</span>
    <span>{b}{caret && <Caret />}</span>
  </BigButton>
);

const Small = ({ icon, text, caret }: { icon: string; text: string; caret?: boolean }) => (
  <SmallButton type="button"><SmallIcon name={icon} />{text}{caret && <Caret />}</SmallButton>
);

const Select = ({ id, w, value }: { id: string; w?: number; value: string }) => (
  <SelectShell $w={w}>
    <select id={id} defaultValue={value}><option>{value}</option></select>
    <Chevron />
  </SelectShell>
);

const Check = ({ text, on }: { text: string; on?: boolean }) => (
  <CheckLabel>
    <CheckShell>
      <RoundBox type="checkbox" defaultChecked={on} />
      <svg width="16" height="12" viewBox="0 0 16 12"><path d="M1 6l5 5 9-10" stroke="#e8f2fb" strokeWidth="2" fill="none" /></svg>
    </CheckShell>
    {text}
  </CheckLabel>
);

const GridCheck = ({ on, label }: { on?: boolean; label: string }) => (
  <CheckShell>
    <SunkenBox type="checkbox" defaultChecked={on} aria-label={label} />
    <Cross s={18} c="#000" w={4} />
  </CheckShell>
);

type Sample = { active?: boolean; type: string; adapt?: boolean; n?: string; from?: string; to?: string; pick?: boolean; merged?: boolean };
const samples: Sample[] = [
  { type: "Max.Range", from: "2", to: "3" },
  { active: true, type: "Monitors", n: "1", from: "2.5", to: "2.5" },
  { active: true, type: "Automatic", adapt: true, n: "1", pick: true },
  { active: true, type: "Automatic", adapt: false },
  { active: false, type: "Single", adapt: false, n: "1", merged: true },
];
const columns: [string, number][] = [["Active", 93], ["Type", 176], ["Adapt.", 92], ["Samples", 110], ["From", 128], ["To", 128], ["Unit", 73]];

const SolverDialog = () => (
  <Dialog role="dialog" aria-labelledby="dlg-title">
    <DialogTitle>
      <span id="dlg-title">Frequency Domain Solver Parameters</span>
      <button type="button" aria-label="Close dialog"><Cross s={20} c="#8a8a8a" w={2} /></button>
    </DialogTitle>
    <DialogBody onSubmit={(e) => e.preventDefault()}>
      <Sections>
        <Row $gap={28}>
          <Box $grow={446} $pad="12px 27px 32px">
            <legend>Method</legend>
            <Stack $gap={12}>
              <FieldLabel htmlFor="sweep">Broadband sweep:</FieldLabel>
              <Select id="sweep" value="General purpose" />
              <MeshRow>
                <FieldLabel htmlFor="mesh">Mesh type:</FieldLabel>
                <PushButton $w={168} type="button">Properties...</PushButton>
              </MeshRow>
              <Select id="mesh" value="Tetrahedral" />
            </Stack>
          </Box>
          <Box $grow={424} $pad="19px 10px 20px 30px">
            <legend>Results</legend>
            <div>
              <Stack $gap={26}>
                <Check text="Store result data in cache" />
                <Check text="Calculate port modes only" />
                <Check text="Normalize S-parameter to" />
              </Stack>
              <Indent>
                <Impedance id="ohm" defaultValue="50" disabled />
                <label htmlFor="ohm">Ohm</label>
              </Indent>
            </div>
          </Box>
        </Row>
        <Box $pad="18px 32px 26px 29px">
          <legend>Excitation</legend>
          <Row $gap={18} $align="flex-end">
            <Stack $gap={10}><FieldLabel htmlFor="src">Source type:</FieldLabel><Select id="src" w={200} value="All Ports" /></Stack>
            <Stack $gap={10}><FieldLabel htmlFor="mode">Mode:</FieldLabel><Select id="mode" w={200} value="All" /></Stack>
            <PushButton $w={262} $right disabled type="button">Select...</PushButton>
          </Row>
        </Box>
        <Box $pad="18px 30px 25px 29px">
          <legend>Frequency samples</legend>
          <div>
            <GridFrame>
              <SampleTable>
                <colgroup>{columns.map(([n, w]) => <col key={n} width={w} />)}</colgroup>
                <thead><tr>{columns.map(([n]) => <th key={n}>{n}</th>)}</tr></thead>
                <tbody>
                  {samples.map((s, i) => (
                    <tr key={i}>
                      <td>{s.active !== undefined && <GridCheck on={s.active} label={`Active, row ${i + 1}`} />}</td>
                      <td>
                        {s.pick ? (
                          <TypePick>
                            <select aria-label="Sample type" defaultValue={s.type}><option>{s.type}</option></select>
                            <DropButton type="button" aria-label="Open list"><Caret c="#000" /></DropButton>
                          </TypePick>
                        ) : s.type}
                      </td>
                      <td>{s.adapt !== undefined && <GridCheck on={s.adapt} label={`Adapt, row ${i + 1}`} />}</td>
                      <td>{s.n}</td>
                      {s.merged ? <td colSpan={2} /> : <><td className="from">{s.from}</td><td>{s.to}</td></>}
                      <td>GHz</td>
                    </tr>
                  ))}
                </tbody>
              </SampleTable>
              <GridScroll><Triangle /><Triangle down /></GridScroll>
            </GridFrame>
          </div>
        </Box>
        <Box $pad="15px 33px 21px 29px">
          <legend>Adaptive mesh refinement</legend>
          <Row $align="flex-end"><Check text="Adaptive tetrahedral mesh refinement" on /><PushButton $w={260} $right type="button">Properties...</PushButton></Row>
        </Box>
        <Box $pad="12px 33px 25px 29px">
          <legend>Sensitivity analysis</legend>
          <Row $align="flex-end"><Check text="Use sensitivity analysis" /><PushButton $w={260} $right disabled type="button">Properties...</PushButton></Row>
        </Box>
      </Sections>
      <ButtonColumn>
        {[["Start", "Close", "Apply"], ["Optimizer...", "Par. Sweep..."], ["Acceleration...", "Specials...", "Simplify Model...", "Domains..."], ["Help"]].map((g) => (
          <Stack key={g[0]} $gap={14}>
            {g.map((t) => <PushButton key={t} $w={200} type="button" disabled={t === "Domains..."}>{t}</PushButton>)}
          </Stack>
        ))}
      </ButtonColumn>
    </DialogBody>
  </Dialog>
);

const docTabs = ["microstrip antenna", "C_matesurface_7*", "Untitled_0*"];

const statusIcons: Record<string, React.ReactNode> = {
  area: <g><path d="M2 20V2h18" stroke="#c85a10" strokeWidth="2" strokeDasharray="2 3" fill="none" /><circle cx="17" cy="15" r="9" fill="#fff" stroke="#555" strokeWidth="2" /><path d="M13 15h8M17 11v8" stroke="#c85a10" strokeWidth="2" /><path d="M23 22l8 8" stroke="#444" strokeWidth="4" /></g>,
  pan: <path d="M16 0l6 7h-4v7h7v-4l7 6-7 6v-4h-7v7h4l-6 7-6-7h4v-7H7v4l-7-6 7-6v4h7V7h-4z" fill="#f0a430" stroke="#c47a18" />,
  rotate: <g><circle cx="16" cy="11" r="9" fill="#6a6a6a" /><path d="M1 14q14 8 22-1l-4-3 12-2v12l-3-3Q14 30 3 22z" fill="url(#orange)" stroke="#a34a08" /><ellipse cx="16" cy="27" rx="9" ry="3" fill="#888" /></g>,
  zoom: <g><circle cx="14" cy="13" r="11" fill="#fff" stroke="#555" strokeWidth="3" /><path d="M14 5l5 6H9zM14 21l5-6H9z" fill="#c85a10" /><path d="M22 22l8 8" stroke="#444" strokeWidth="5" /></g>,
  spin: <g><circle cx="16" cy="18" r="5" fill="#777" /><path d="M7 9q-6 8 0 15t16 3q9-7 3-16" fill="none" stroke="url(#orange)" strokeWidth="5" /><path d="M18 2h12v12z" fill="#ec9a20" /></g>,
  fit: <g><rect x="2" y="3" width="28" height="27" fill="#fff" stroke="#777" strokeWidth="2" /><path d="M6 13V7h6M20 7h6v6M26 20v6h-6M12 26H6v-6M7 8l6 6M25 8l-6 6M25 25l-6-6M7 25l6-6" stroke="#d8661a" strokeWidth="2" fill="none" /></g>,
  brush: <g><path d="M1 30l6-6h20l-3 6z" fill="#bbb" /><path d="M5 12l4-3h15v15l-4 4H5z" fill="#c8662a" stroke="#5a3a28" strokeWidth="2" /><path d="M17 14L31 1" stroke="#444" strokeWidth="4" /></g>,
  cube: <path d="M3 8l13-6 13 6v16l-13 6-13-6zM3 8l13 7 13-7M16 15v15" fill="#f4f4f4" stroke="#888" strokeWidth="3" />,
  props: <g><path d="M3 5h26v24H3z" fill="#eee" stroke="#999" strokeWidth="2" /><path d="M7 10h7v6H7zM7 20h7v6H7zM18 18h8M18 23h8" fill="none" stroke="#999" strokeWidth="2" /><circle cx="23" cy="8" r="7" fill="#a5a5a5" /><path d="M19 8h8M23 4v8" stroke="#fff" strokeWidth="2" /></g>,
};
const StatusTool = ({ name, on }: { name: string; on?: boolean }) => (
  <Tool $on={on} type="button" aria-label={name}><svg width="32" height="32" viewBox="0 0 32 32">{statusIcons[name]}</svg></Tool>
);

export default function App() {
  return (
    <Window>
      <GlobalStyle />
      <Defs />
      <TitleArea>
        <TitleBar>
          <QuickAccess>
            {quick.map((g, i) => (
              <button key={i} type="button" aria-label="Quick action"><svg width="32" height="32" viewBox="0 0 32 32">{g}</svg></button>
            ))}
            <svg width="12" height="14" viewBox="0 0 12 14"><path d="M1 1h10v2H1zM0 7h12l-6 6z" fill="#c9d6df" /></svg>
          </QuickAccess>
          <WindowTitle>Untitled_0 - CST Studio Suite</WindowTitle>
          <WindowControls>
            <button type="button" aria-label="Minimize"><svg width="14" height="18" viewBox="0 0 14 18"><path d="M1 12h12v4H1z" fill="#c9d6df" /></svg></button>
            <button type="button" aria-label="Restore"><svg width="18" height="18" viewBox="0 0 18 18"><path d="M5 1h12v9h-4M1 7h11v10H1zM1 8h11M5 2h12" fill="none" stroke="#c9d6df" strokeWidth="2" /></svg></button>
            <button type="button" aria-label="Close window"><Cross s={18} c="#c9d6df" w={3} /></button>
          </WindowControls>
        </TitleBar>
        <TabStrip>
          <MenuTab $file type="button">File</MenuTab>
          {["Home", "Modeling", "Simulation", "Post-Processing", "View"].map((t) => (
            <MenuTab key={t} $active={t === "Simulation"} type="button">{t}</MenuTab>
          ))}
          <StripEnd>
            <SearchField>
              <input type="text" placeholder="Search (Alt+Q)" aria-label="Search commands" />
              <svg width="32" height="32" viewBox="0 0 32 32"><circle cx="13" cy="12" r="10" fill="none" stroke="#8f9aa2" strokeWidth="3" /><path d="M20 19l10 10" stroke="#8f9aa2" strokeWidth="5" /></svg>
            </SearchField>
            <svg width="18" height="14" viewBox="0 0 18 14"><path d="M2 12l7-8 7 8" fill="none" stroke="#c9d6df" strokeWidth="4" /></svg>
            <svg width="32" height="32" viewBox="0 0 32 32"><circle cx="16" cy="16" r="14" fill="#3f78d8" stroke="#8db0ea" strokeWidth="2" /><text x="16" y="25" textAnchor="middle" fontFamily={UI} fontWeight="700" fontSize="24" fill="#fff">?</text></svg>
            <Caret c="#dfe8ee" />
          </StripEnd>
        </TabStrip>
      </TitleArea>

      <Ribbon>
        <Group $w={223}>
          <GroupBody $pad={24}>
            <SmallColumn $pad={0}><Small icon="frequency" text="Frequency" /><Small icon="background" text="Background" /><Small icon="boundaries" text="Boundaries" /></SmallColumn>
          </GroupBody>
          <GroupLabel>Settings</GroupLabel>
        </Group>
        <Group $w={708}>
          <GroupBody $pad={16}>
            <Big icon="waveguide" a="Waveguide" b="Port" w={130} />
            <Big icon="discrete" a="Discrete" b="Port" w={124} caret />
            <Big icon="plane" a="Plane" b="Wave" w={88} />
            <Big icon="lumped" a="Lumped" b="Element" w={148} caret />
            <SmallColumn $pad={0}><Small icon="import" text="Field Import" /><Small icon="source" text="Field Source" /></SmallColumn>
          </GroupBody>
          <GroupLabel>Sources and Loads</GroupLabel>
        </Group>
        <Group $w={258}>
          <GroupBody $pad={16}><Big icon="monitor" a="Field" b="Monitor" w={120} /><Big icon="probe" a="Field" b="Probe" w={120} /></GroupBody>
          <GroupLabel>Monitors</GroupLabel>
        </Group>
        <Group $w={316}>
          <GroupBody $pad={11}>
            <Big icon="setup" a="Setup" b="Solver" w={110} />
            <SmallColumn $pad={10}><Small icon="optimizer" text="Optimizer" /><Small icon="sweep" text="Par. Sweep" /><Small icon="logfile" text="Logfile" caret /></SmallColumn>
          </GroupBody>
          <GroupLabel>Solver</GroupLabel>
        </Group>
        <Group $w={311}>
          <GroupBody $pad={14}>
            <Big icon="picks" a="Picks" w={80} caret />
            <SmallColumn $pad={12}><Small icon="points" text="Pick Points" caret /><Small icon="lists" text="Pick Lists" caret /><Small icon="clear" text="Clear Picks" /></SmallColumn>
          </GroupBody>
          <GroupLabel>Picks</GroupLabel>
        </Group>
        <Group $w={271}>
          <GroupBody $pad={17}><Big icon="mesh" a="Mesh" b="View" w={84} on /><Big icon="global" a="Global" b="Properties" w={168} caret /></GroupBody>
          <GroupLabel>Mesh</GroupLabel>
        </Group>
        <Group $w={353}>
          <GroupBody $pad={10}><Big icon="check" a="Intersection" b="Check" w={152} /><Big icon="electrical" a="Electrical" b="Connections" w={186} caret /></GroupBody>
          <GroupLabel>Check</GroupLabel>
        </Group>
      </Ribbon>

      <Body>
        <Sidebar>
          <PanelTitle>Workspace<button type="button" aria-label="Close workspace"><Cross /></button></PanelTitle>
          <FileList>
            <FileRows>
              <FileRow $depth={0}>
                <svg width="20" height="12" viewBox="0 0 20 12"><path d="M2 2l8 7 8-7" stroke="#222" strokeWidth="4" fill="none" /></svg>
                <SuiteIcon />Workspace
              </FileRow>
              <FileRow $depth={1}><CstIcon />microstrip antenna.cst</FileRow>
              <FileRow $depth={1}><CstIcon />C_matesurface_7.cst</FileRow>
              <FileRow $depth={1} $bold><CstIcon />Untitled_0</FileRow>
            </FileRows>
            <ScrollTrack>
              <ScrollButton type="button" aria-label="Scroll up"><Triangle /></ScrollButton>
              <ScrollThumb />
              <ScrollButton $end type="button" aria-label="Scroll down"><Triangle down /></ScrollButton>
            </ScrollTrack>
          </FileList>
          <Splitter />
          <PanelTitle>Navigation Tree<button type="button" aria-label="Close tree"><Cross /></button></PanelTitle>
          <TreeSearch placeholder="Search" aria-label="Search tree" />
          <Tree>
            {treeItems.map(([name, icon, guides], i) => (
              <TreeRow key={name}>
                {guides.map((g, n) => <GuideCell key={n} {...g} />)}
                <svg width="32" height="32" viewBox="0 0 32 32">{nodes[icon]}</svg>
                <NodeName $selected={i === 0}>{name}</NodeName>
              </TreeRow>
            ))}
          </Tree>
        </Sidebar>

        <Main>
          <DocTabs>
            {docTabs.map((t, i) => (
              <DocTab key={t} $active={i === 2}>
                <CstIcon />{t}
                <TabClose $hot={i === 2} type="button" aria-label={`Close ${t}`}><Cross s={14} c="#fff" /></TabClose>
              </DocTab>
            ))}
          </DocTabs>
          <Viewport>
            <Scene />
            <BoundaryNote>
              <h3>Boundary</h3>
              <dt>Type</dt><dd>Open (add space)</dd>
              <dt>Position</dt><dd>Zmax</dd>
            </BoundaryNote>
          </Viewport>
          <ViewTabs $h={36}>
            <ViewTab $active $w={200} type="button">3D</ViewTab>
            <ViewTab $w={200} $line type="button">Schematic</ViewTab>
          </ViewTabs>
          <Splitter />
          <Dock>
            <DockPane>
              <PanelTitle>Result Navigator</PanelTitle>
              <ResultBox>
                <ResultTable>
                  <thead>
                    <tr>
                      <th><svg width="28" height="32" viewBox="0 0 28 32"><path d="M2 2h24L17 14v12l-6 4V14z" fill="#ddd" stroke="#8a8a8a" strokeWidth="2" /></svg></th>
                      <th><HeaderCell>3D Run ID<Chevron /></HeaderCell></th>
                    </tr>
                  </thead>
                  <tbody>
                    <tr>
                      <td><svg width="32" height="20" viewBox="0 0 32 20"><path d="M5 10h10M16 4v12" stroke="#8a8a8a" strokeWidth="2" /><path d="M16 5l4 2h4l3-2v10l-3-2h-4l-4 2z" fill="#8a8a8a" /></svg></td>
                      <td>0: Current Run</td>
                    </tr>
                  </tbody>
                </ResultTable>
              </ResultBox>
              <ViewTabs $h={40}>
                <ViewTab $active $w={240} type="button">Result Navigator</ViewTab>
                <ViewTab $w={217} $line type="button">Parameter List</ViewTab>
              </ViewTabs>
            </DockPane>
            <div />
            <DockPane>
              <PanelTitle>&nbsp;<button type="button" aria-label="Close messages"><Cross /></button></PanelTitle>
              <MessageTools />
              <MessageBox />
              <ViewTabs $h={42}>
                <ViewTab $w={144} $line type="button">Progress</ViewTab>
                <ViewTab $active $w={144} type="button">Messages</ViewTab>
              </ViewTabs>
            </DockPane>
          </Dock>
        </Main>
      </Body>

      <StatusBar>
        Ready
        <StatusTools>
          <StatusTool name="area" /><StatusTool name="pan" on /><StatusTool name="rotate" /><StatusTool name="zoom" /><StatusTool name="spin" />
          <ToolDivider /><StatusTool name="fit" /><StatusTool name="brush" />
          <ToolDivider /><StatusTool name="cube" /><Caret c="#777" /><ToolDivider /><StatusTool name="props" />
        </StatusTools>
        <Reading>Raster=10.000</Reading>
        <Reading>Tetrahedrons</Reading>
        <Reading $blue>Normal</Reading>
        <Reading>{"mm  GHz  ns  K"}</Reading>
      </StatusBar>
      <Taskbar><TaskPill /></Taskbar>
      <Watermark>CSDN @木棉.</Watermark>
      <SolverDialog />
    </Window>
  );
}
